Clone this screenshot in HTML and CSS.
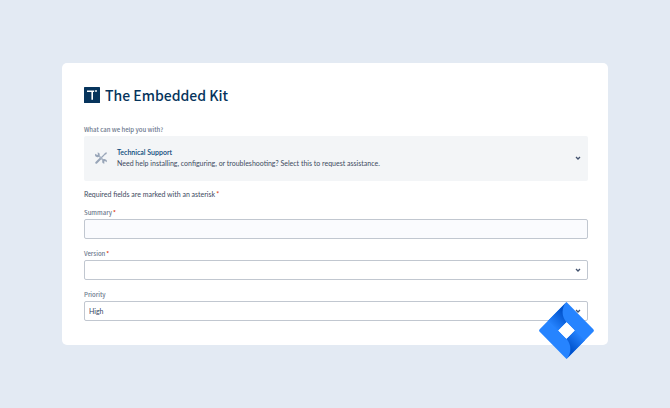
FILE: index.html
```html
<!DOCTYPE html>
<html lang="en">
<head>
    <meta charset="UTF-8">
    <meta name="viewport" content="width=device-width, initial-scale=1.0">
    <title>The Embedded Kit</title>
    <link rel="stylesheet" href="styles.css">
</head>
<body>
    <main class="card">
        <header class="brand">
            <svg class="brand-logo" viewBox="0 0 16 16" aria-hidden="true">
                <rect width="16" height="16" rx="0.5" fill="#06345c"/>
                <path d="M3 4.2h7M8.2 4.2v8.6" stroke="#fff" stroke-width="1.6" fill="none"/>
                <path d="M10.8 4h2.2" stroke="#fff" stroke-width="1.4"/>
            </svg>
            <h1>The Embedded Kit</h1>
        </header>

        <form>
            <div class="field">
                <label for="requestType">What can we help you with?</label>
                <button type="button" id="requestType" class="request-type" aria-haspopup="listbox">
                    <svg class="tools" viewBox="0 0 16 16" aria-hidden="true">
                        <path d="M2.6 13.4L8 8" stroke="#98a5b8" stroke-width="2.4" stroke-linecap="round"/>
                        <path d="M8 8L13 3" stroke="#98a5b8" stroke-width="1.4"/>
                        <path d="M12 2.6l2-1.2.8.8-1.2 2z" fill="#98a5b8"/>
                        <path d="M4.6 4.6l7 7" stroke="#a9b4c4" stroke-width="1.8"/>
                        <path d="M1.6 3.2A2.6 2.6 0 1 0 4 1.8L4.6 4 3.6 4.7z" fill="#98a5b8"/>
                        <path d="M14.4 12.8A2.6 2.6 0 1 0 12 14.4L11.6 12 12.6 11.4z" fill="#98a5b8"/>
                    </svg>
                    <span class="request-text">
                        <span class="request-title">Technical Support</span>
                        <span>Need help installing, configuring, or troubleshooting? Select this to request assistance.</span>
                    </span>
                    <svg class="chevron" viewBox="0 0 6 4" aria-hidden="true"><path d="M1 1l2 2 2-2"/></svg>
                </button>
            </div>

            <p class="note">Required fields are marked with an asterisk<span class="required">*</span></p>

            <div class="field">
                <label for="summary">Summary<span class="required">*</span></label>
                <input type="text" id="summary" class="control summary" required>
            </div>

            <div class="field">
                <label for="version">Version<span class="required">*</span></label>
                <div class="select-box">
                    <select id="version" class="control" required>
                        <option value=""></option>
                    </select>
                    <svg class="chevron" viewBox="0 0 6 4" aria-hidden="true"><path d="M1 1l2 2 2-2"/></svg>
                </div>
            </div>

            <div class="field">
                <label for="priority">Priority</label>
                <div class="select-box">
                    <select id="priority" class="control">
                        <option>High</option>
                    </select>
                    <svg class="chevron" viewBox="0 0 6 4" aria-hidden="true"><path d="M1 1l2 2 2-2"/></svg>
                </div>
            </div>
        </form>

        <svg class="jira" viewBox="0 0 55 57" aria-hidden="true">
            <defs>
                <linearGradient id="shadeTop" gradientUnits="userSpaceOnUse" x1="27" y1="8" x2="12" y2="23">
                    <stop offset="0.15" stop-color="#0052cc"/>
                    <stop offset="1" stop-color="#2684ff"/>
                </linearGradient>
                <linearGradient id="shadeBottom" gradientUnits="userSpaceOnUse" x1="28" y1="49" x2="43" y2="34">
                    <stop offset="0.15" stop-color="#0052cc"/>
                    <stop offset="1" stop-color="#2684ff"/>
                </linearGradient>
            </defs>
            <path fill="#2684ff" fill-rule="evenodd" d="M27.5 0L54.3 27.2Q55.5 28.5 54.3 29.8L27.5 57L0.7 29.8Q-0.5 28.5 0.7 27.2ZM27.5 20.3L19.3 28.5L27.5 36.7L35.7 28.5Z"/>
            <path fill="url(#shadeTop)" d="M27.5 0C22.3 6 22.3 14 27.5 20.3L19.3 28.5L9 18.8Z"/>
            <path fill="url(#shadeBottom)" d="M27.5 57C32.7 51 32.7 43 27.5 36.7L35.7 28.5L46 38.2Z"/>
            <path fill="#fff" d="M27.5 20.3L35.7 28.5L27.5 36.7L19.3 28.5Z"/>
        </svg>
    </main>
</body>
</html>
```

FILE: styles.css
```css
* {
    box-sizing: border-box;
}

body {
    margin: 0;
    padding: 63px 62px;
    background: #e3eaf3;
    color: #3d4a60;
    font-family: Lato, "Open Sans", sans-serif;
    font-size: 7px;
    line-height: 11px;
}

.card {
    position: relative;
    padding: 21px 20px 24px 22px;
    background: #fff;
    border-radius: 5px;
}

.brand {
    display: flex;
    align-items: center;
    gap: 5px;
    margin-bottom: 20px;
}

.brand-logo {
    width: 16px;
    height: 16px;
}

.brand h1 {
    margin: 0;
    color: #06345c;
    font-family: "Noto Sans CJK SC", "Noto Sans", sans-serif;
    font-size: 14px;
    font-weight: 500;
    line-height: 22px;
}

.field {
    display: flex;
    flex-direction: column;
    gap: 2px;
}

.field + .field {
    margin-top: 11px;
}

label {
    color: #6b778c;
    font-family: "Noto Sans CJK SC", "Noto Sans", sans-serif;
    font-size: 6px;
    font-weight: 500;
    line-height: 8px;
}

.required {
    margin-left: 1px;
    color: #de350b;
}

.request-type {
    display: flex;
    align-items: center;
    gap: 9px;
    width: 100%;
    padding: 11px 7px 12px 10px;
    border: none;
    border-radius: 2px;
    background: #f3f5f7;
    color: inherit;
    font: inherit;
    text-align: left;
    cursor: pointer;
}

.tools {
    width: 14px;
    height: 14px;
}

.request-text {
    display: flex;
    flex: 1;
    flex-direction: column;
}

.request-title {
    color: #0b4a7a;
    font-weight: 600;
}

.note {
    margin: 8px 0 9px;
}

.control {
    width: 100%;
    height: 20px;
    padding: 0 4px;
    border: 1px solid #c1c7d0;
    border-radius: 2px;
    background: #fff;
    color: #344563;
    font: inherit;
    appearance: none;
}

.summary {
    background: #fafbfe;
}

.select-box {
    position: relative;
}

.chevron {
    width: 6px;
    height: 4px;
    fill: none;
    stroke: #42526e;
    stroke-width: 1.3;
}

.select-box .chevron {
    position: absolute;
    top: 8px;
    right: 7px;
    pointer-events: none;
}

.jira {
    position: absolute;
    right: 14px;
    bottom: -14px;
    width: 55px;
    height: 57px;
}
```
